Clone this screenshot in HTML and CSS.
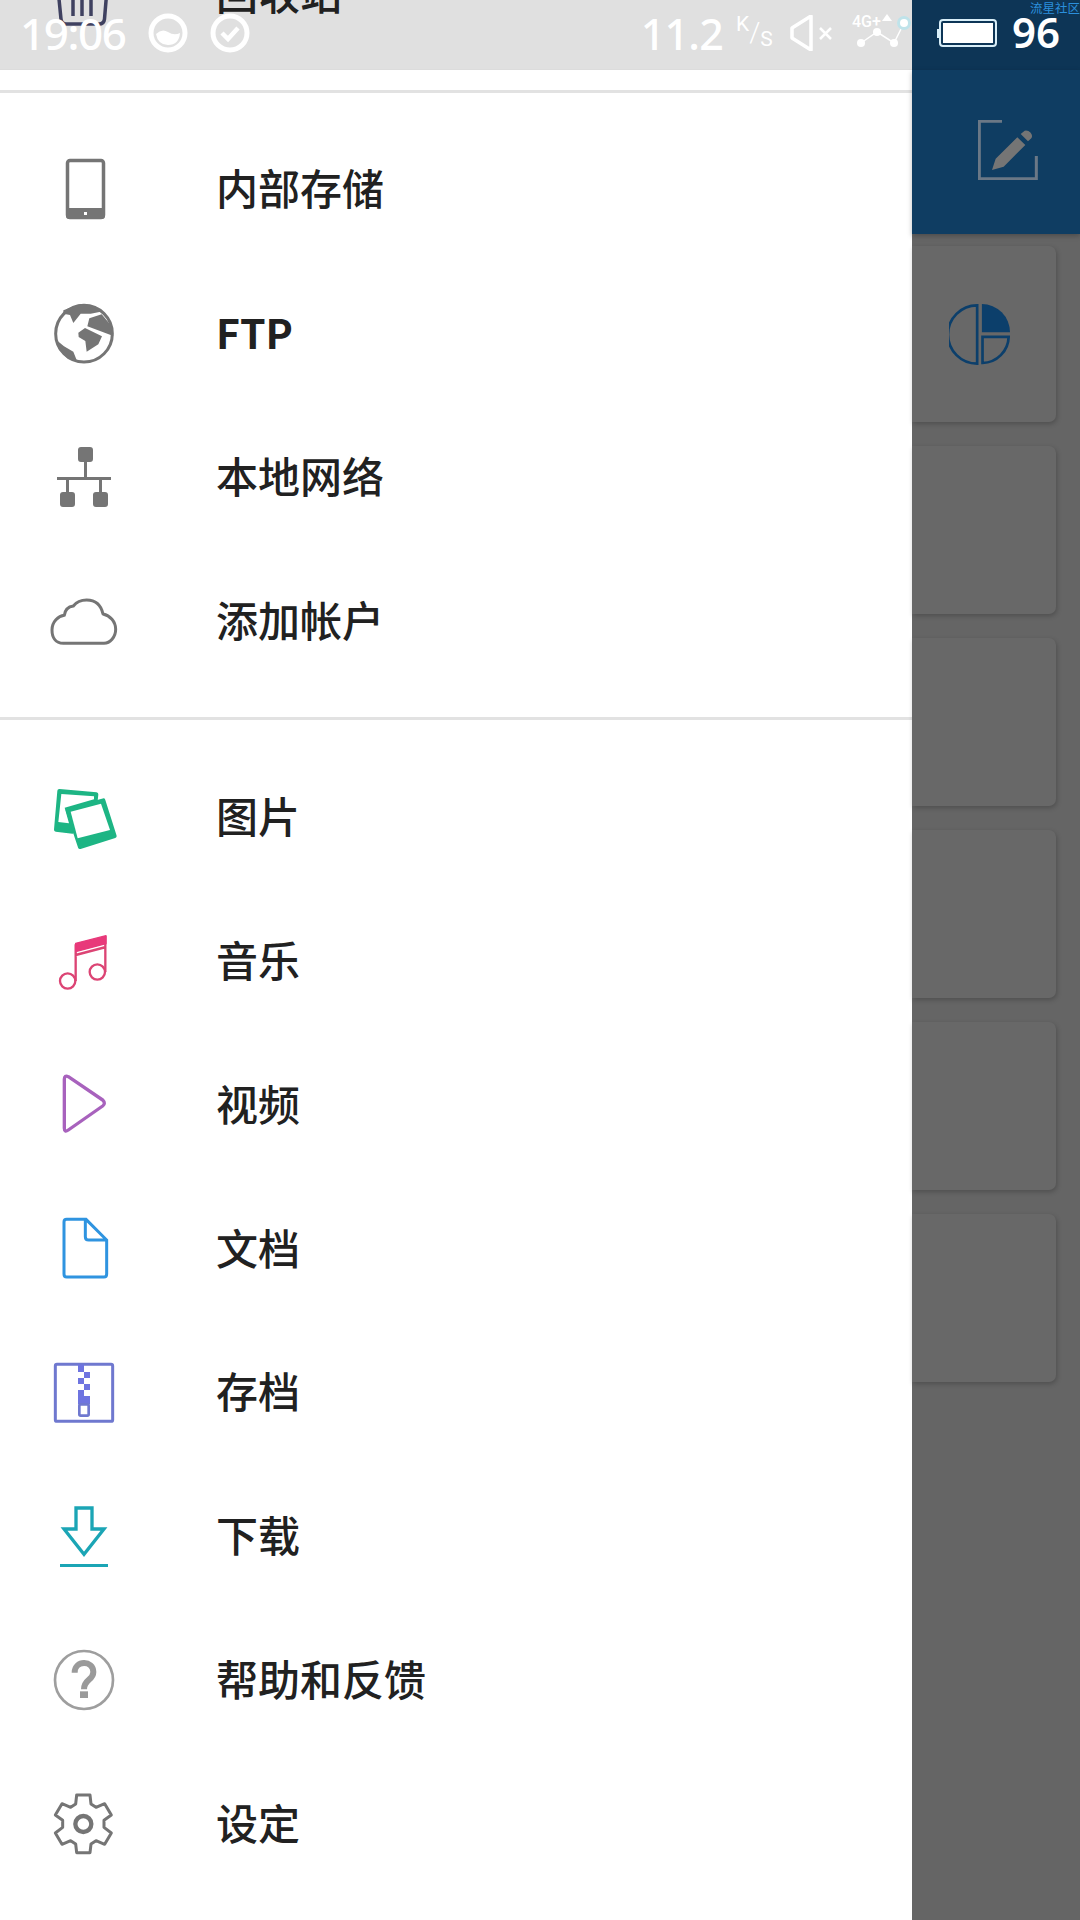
FILE: index.html
```html
<!DOCTYPE html>
<html lang="zh-CN">
<head>
<meta charset="utf-8">
<title>文件管理</title>
<link rel="stylesheet" href="styles.css">
</head>
<body>
<div class="screen">
  <nav class="drawer">
    <div class="drawer-top">
      <div class="row row-peek">
        <svg class="icon" viewBox="0 0 72 72"><path d="M10 30 L13 60 Q13.500 65 18 65 H51 Q56 65 56.500 60 L59 30" class="trash"/><path d="M25 36 V57 M34 36 V57 M43 36 V57" class="trash"/></svg>
        <span class="label">回收站</span>
      </div>
    </div>
    <div class="divider divider-first"></div>
    <div class="group group-first">
      <div class="row">
        <svg class="icon" viewBox="0 0 72 72"><rect x="19.500" y="6.500" width="36" height="57" rx="2.500" class="gray-line"/><path d="M18 54 H57 V62 Q57 65 54 65 H21 Q18 65 18 62 Z" class="gray-fill"/><rect x="36" y="58" width="3" height="3" fill="#fff"/></svg>
        <span class="label">内部存储</span>
      </div>
      <div class="row">
        <svg class="icon" viewBox="54 51 216 216"><circle cx="162" cy="158" r="85" fill="#fff" stroke="#757575" stroke-width="9"/><path class="gray-fill" d="M100 88 L150 70 L195 76 L212 92 L182 98 L152 98 L130 126 L120 102 L100 98 Z M178 112 L215 100 L240 130 L250 165 L172 136 Z M145 155 L165 141 L216 166 L205 190 L170 212 L166 180 L146 168 Z M80 178 L102 196 L130 212 L142 242 L112 232 L86 204 Z"/></svg>
        <span class="label label-latin">FTP</span>
      </div>
      <div class="row">
        <svg class="icon" viewBox="54 483 216 216"><path class="gray-fill" d="M153 501 H180 Q189 501 189 510 V537 Q189 546 180 546 H171 V591 H243 V600 H216 V636 H225 Q234 636 234 645 V672 Q234 681 225 681 H198 Q189 681 189 672 V645 Q189 636 198 636 H207 V600 H117 V636 H126 Q135 636 135 645 V672 Q135 681 126 681 H99 Q90 681 90 672 V645 Q90 636 99 636 H108 V600 H81 V591 H162 V546 H153 Q144 546 144 537 V510 Q144 501 153 501 Z"/></svg>
        <span class="label">本地网络</span>
      </div>
      <div class="row">
        <svg class="icon" viewBox="54 915 216 216"><path class="gray-line thick" d="M100 1090 C75 1090 66 1070 66 1050 C66 1025 85 1008 103 1006 C105 990 115 980 130 978 C140 965 155 960 170 960 C195 960 213 975 219 1002 C240 1006 257 1025 257 1048 C257 1072 240 1090 222 1090 Z"/></svg>
        <span class="label">添加帐户</span>
      </div>
    </div>
    <div class="divider"></div>
    <div class="group group-second">
      <div class="row">
        <svg class="icon" viewBox="54 36 216 216"><path class="green" d="M88 63 L199 73 L197 92 L108 116 L128 185 L78 179 Z"/><path fill="#fff" d="M94 72 L192 79 L192 88 L104 113 L117 160 L85 156 Z"/><path class="green" d="M113 120 L220 91 L254 198 L150 231 Z"/><path fill="#fff" d="M122 125 L213 101 L240 180 L143 205 Z"/></svg>
        <span class="label">图片</span>
      </div>
      <div class="row">
        <svg class="icon" viewBox="54 465 216 216"><circle cx="113" cy="630" r="23" class="pink-line"/><circle cx="202" cy="603" r="23" class="pink-line"/><path class="pink-line" d="M137 520 V630 M226 495 V603 M137 552 L228 528"/><path fill="#e8397a" stroke="#e8397a" stroke-width="4" stroke-linejoin="round" d="M137 517 L228 494 V518 L137 542 Z"/></svg>
        <span class="label">音乐</span>
      </div>
      <div class="row">
        <svg class="icon" viewBox="54 897 216 216"><path fill="none" stroke="#a862bd" stroke-width="10" stroke-linejoin="round" d="M103 928 Q103 915 115 920 L218 990 Q228 1000 218 1008 L115 1080 Q103 1088 103 1075 Z"/></svg>
        <span class="label">视频</span>
      </div>
      <div class="row">
        <svg class="icon" viewBox="54 69 216 216"><path fill="none" stroke="#2f94e0" stroke-width="9" d="M110 88 H168 L230 150 V252 Q230 261 222 261 H110 Q102 261 102 252 V96 Q102 88 110 88 Z M166 88 V140 Q166 150 176 150 H230"/></svg>
        <span class="label">文档</span>
      </div>
      <div class="row">
        <svg class="icon" viewBox="54 498 216 216"><rect x="76" y="520" width="172" height="171" rx="5" fill="none" stroke="#6f78cf" stroke-width="9"/><path fill="#6e74e0" d="M144 520 H162 V543 H180 V561 H162 V579 H180 V597 H162 V615 H180 V640 H144 V597 H162 V579 H144 V561 H162 V543 H144 Z"/><rect x="148" y="640" width="28" height="34" rx="4" fill="none" stroke="#6f78cf" stroke-width="8"/></svg>
        <span class="label">存档</span>
      </div>
      <div class="row">
        <svg class="icon" viewBox="54 930 216 216"><path fill="none" stroke="#1ba5b5" stroke-width="10" d="M138 951 H186 V1014 H222 L162 1090 L102 1014 H138 Z"/><rect x="90" y="1119" width="144" height="9" fill="#1ba5b5"/></svg>
        <span class="label">下载</span>
      </div>
      <div class="row">
        <svg class="icon" viewBox="54 72 216 216"><circle cx="162" cy="180" r="87" fill="none" stroke="#9e9e9e" stroke-width="8"/><path fill="none" stroke="#9a9a9a" stroke-width="18" d="M134 158 C134 120 190 120 190 156 C190 182 162 176 162 208"/><rect x="150" y="214" width="24" height="20" fill="#9a9a9a"/></svg>
        <span class="label">帮助和反馈</span>
      </div>
      <div class="row">
        <svg class="icon" viewBox="54 504 216 216"><path class="gray-line thick" d="M140 525 H180 L183 552 L198 562 L224 551 L244 585 L222 601 V622 L244 639 L224 673 L198 662 L183 672 L180 698 H140 L137 672 L122 662 L96 673 L76 639 L98 622 V601 L76 585 L96 551 L122 562 L137 552 Z"/><circle cx="160" cy="612" r="24" fill="none" stroke="#757575" stroke-width="13"/></svg>
        <span class="label">设定</span>
      </div>
    </div>
  </nav>

  <section class="backdrop">
    <div class="band"></div>
    <header class="bar">
      <svg class="edit" viewBox="355 240 180 180"><path fill="none" stroke="#6b7886" stroke-width="9" d="M427 244 H359 V416 H530 V348"/><path fill="#757575" d="M397 390 L408 356 L473 292 L497 315 L432 380 Z M483 282 L495 272 Q505 270 513 278 Q520 287 515 295 L505 304 Z"/></svg>
    </header>
    <div class="cards">
      <div class="card card-tall"><svg class="pie" viewBox="148 222 182 182"><path fill="none" stroke="#0c3f6b" stroke-width="8" d="M232 226 A 87 87 0 0 0 232 400 Z M248 320 H326 A 80 80 0 0 1 248 398 Z"/><path fill="#0c3f6b" d="M246 222 A 84 84 0 0 1 330 306 H246 Z"/></svg></div>
      <div class="card"></div>
      <div class="card"></div>
      <div class="card"></div>
      <div class="card"></div>
      <div class="card"></div>
    </div>
  </section>

  <div class="status">
    <div class="status-left">
      <span class="clock">19:06</span>
      <svg class="dot" viewBox="0 0 40 40"><circle cx="20" cy="20" r="17" fill="none" stroke="#fff" stroke-width="5"/><path fill="#fff" d="M8 21 Q14 15 20 19 Q26 23 32 20 Q31 32 20 32 Q10 32 8 21 Z"/></svg>
      <svg class="dot" viewBox="0 0 40 40"><circle cx="20" cy="20" r="17" fill="none" stroke="#fff" stroke-width="5"/><path fill="none" stroke="#fff" stroke-width="4.500" d="M12 20 L18 26 L28 15"/></svg>
    </div>
    <div class="status-right">
      <span class="speed">11.2</span>
      <span class="unit"><span class="unit-k">K</span><span class="unit-slash">/</span><span class="unit-s">S</span></span>
      <svg class="mute" viewBox="0 0 42 36"><path fill="none" stroke="#fff" stroke-width="3.500" stroke-linejoin="round" d="M21 1 V35 L2 23 V13 Z"/><path fill="none" stroke="#fff" stroke-width="2.500" d="M30 13 L41 24 M41 13 L30 24"/></svg>
      <svg class="net" viewBox="0 0 72 40"><text x="0" y="14" class="net-text">4G+</text><path fill="#fff" d="M30 8 L35 1 L40 8 Z"/><path fill="none" stroke="#fff" stroke-width="1.500" d="M9 30 L25 19 L42 30 L52 10"/><circle cx="9" cy="30" r="4" fill="#fff"/><circle cx="25" cy="19" r="4" fill="#fff"/><circle cx="42" cy="30" r="4" fill="#fff"/><circle cx="52" cy="10" r="7" fill="#bfe3ea"/><circle cx="52" cy="10" r="4" fill="#fff"/></svg>
      <svg class="battery" viewBox="0 0 60 28"><rect x="0" y="10" width="2" height="9" fill="#d8eef8"/><rect x="3" y="1" width="56" height="26" rx="3" fill="none" stroke="#d8eef8" stroke-width="2"/><rect x="6" y="4" width="50" height="20" fill="#fff"/></svg>
      <span class="level">96</span>
    </div>
    <span class="brand">流星社区</span>
  </div>
</div>
</body>
</html>
```
FILE: styles.css
```css
* { box-sizing: border-box; }
html, body { margin: 0; padding: 0; }
body { width: 1080px; height: 1920px; overflow: hidden; font-family: "Noto Sans CJK SC", "Noto Sans", sans-serif; }

.screen { position: relative; display: flex; width: 1080px; height: 1920px; overflow: hidden; background: #656565; }

.drawer { display: flex; flex-direction: column; width: 912px; height: 1920px; background: #fff; flex: none; }
.drawer-top { height: 70px; overflow: hidden; background: #e0e0e0; flex: none; border-bottom: 1px solid #dcdcdc; }
.divider { height: 3px; background: #e2e2e2; flex: none; }
.divider-first { margin-top: 20px; }
.group-first { padding: 25px 0 24px; }
.group-second { padding: 26px 0 0; }

.row { display: flex; align-items: center; height: 143.75px; padding-left: 48px; }
.row-peek { margin-top: -77px; }
.icon { width: 72px; height: 72px; flex: none; }
.label { margin: 0 0 5px 96px; font-size: 42px; font-weight: 500; line-height: 1; color: #212121; white-space: nowrap; }
.label-latin { font-size: 41px; font-weight: 700; }

.trash { fill: none; stroke: #3f4160; stroke-width: 3.5; }
.gray-line { fill: none; stroke: #757575; stroke-width: 3.5; }
.gray-line.thick { stroke-width: 9; stroke-linejoin: round; }
.gray-fill { fill: #757575; }
.green { fill: #1db584; stroke: #1db584; stroke-width: 12; stroke-linejoin: round; }
.pink-line { fill: none; stroke: #dc4474; stroke-width: 7; }

.backdrop { display: flex; flex-direction: column; flex: 1; min-width: 0; background: #656565; }
.band { height: 70px; background: #0d3556; flex: none; }
.bar { display: flex; align-items: center; height: 164px; padding: 0 0 4px 66px; background: #0f3d62; flex: none; box-shadow: 0 2px 5px rgba(0, 0, 0, .25); }
.edit { width: 60px; height: 60px; }

.cards { display: flex; flex-direction: column; gap: 24px; padding: 12px 24px 0 0; }
.card { display: flex; align-items: center; height: 168px; padding-left: 37px; background: #686868; border-radius: 0 7px 7px 0; box-shadow: 1px 2px 5px rgba(0, 0, 0, .22); }
.card-tall { height: 176px; }
.pie { width: 61px; height: 61px; }

.status { position: absolute; top: 0; left: 0; display: flex; align-items: center; justify-content: space-between; width: 1080px; height: 70px; padding: 0 20px 4px 20px; color: #fff; }
.status-left, .status-right { display: flex; align-items: center; }
.clock { width: 106px; margin-right: 22px; font-family: "Noto Sans", sans-serif; font-size: 44px; font-weight: 500; line-height: 1; letter-spacing: -1.400px; white-space: nowrap; }
.dot { width: 40px; height: 40px; margin-right: 22px; }
.speed { font-family: "Noto Sans", sans-serif; font-size: 43px; font-weight: 500; line-height: 1; letter-spacing: -.8px; }
.unit { display: flex; align-items: flex-start; width: 34px; height: 34px; margin: 0 20px 0 13px; font-family: Roboto, sans-serif; line-height: 1; color: #fff; }
.unit-k { font-size: 21px; margin-top: -2px; }
.unit-slash { font-size: 28px; font-weight: 300; margin-top: 3px; }
.unit-s { font-size: 21px; margin-top: 13px; }
.mute { width: 42px; height: 36px; margin-right: 20px; }
.net { width: 72px; height: 40px; margin-right: 13px; }
.net-text { font-family: Roboto, sans-serif; font-size: 16px; font-weight: 500; fill: #fff; }
.battery { width: 60px; height: 28px; margin-right: 15px; }
.level { margin-top: -3px; font-family: "Noto Sans", sans-serif; font-size: 42px; font-weight: 600; line-height: 30px; }
.brand { position: absolute; top: 0; right: 0; font-size: 12.500px; line-height: 15px; color: #2b8fdc; white-space: nowrap; }
```
